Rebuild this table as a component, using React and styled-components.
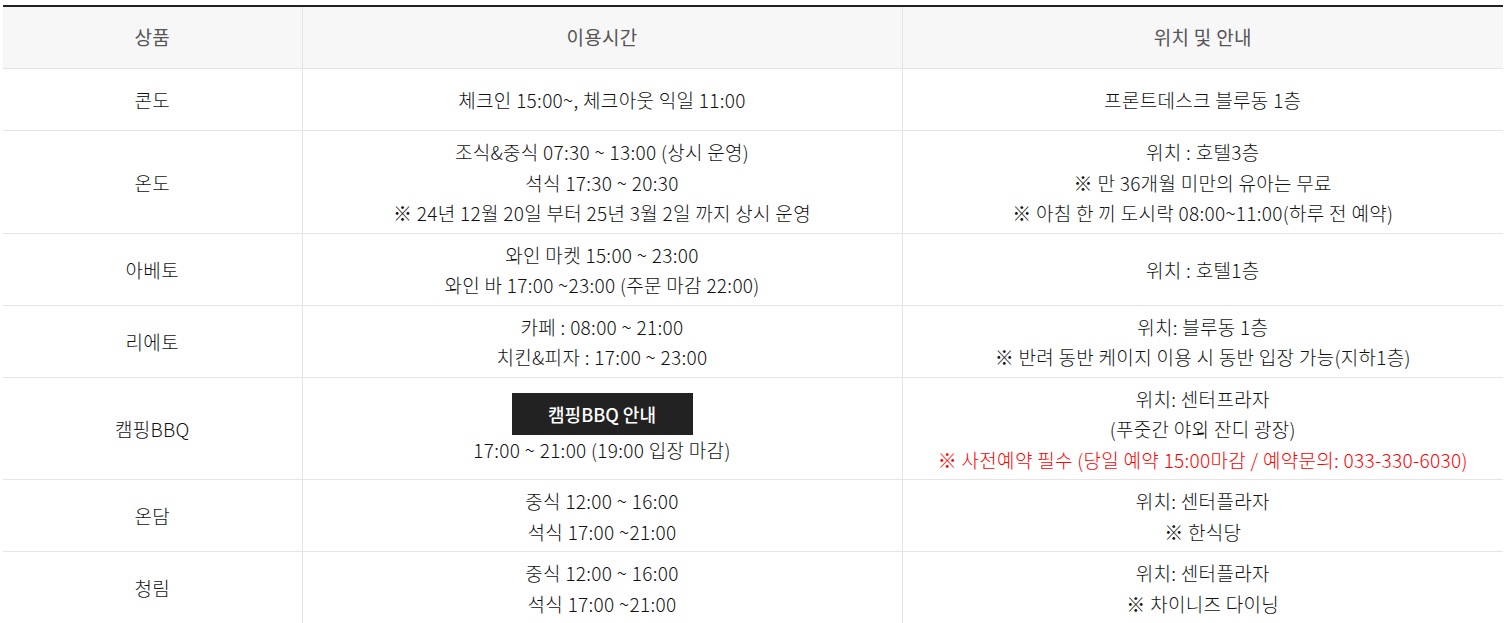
import React from "react";
import styled, { createGlobalStyle } from "styled-components";

const GlobalStyle = createGlobalStyle`
  html, body {
    margin: 0;
    padding: 0;
    background: #fff;
  }
  body {
    font-family: "Noto Sans CJK KR", "Noto Sans", sans-serif;
    color: #222;
  }
`;

const Wrap = styled.div`
  padding: 5px 6px 0 3px;
`;

const Table = styled.table`
  width: 1500px;
  border-collapse: collapse;
  table-layout: fixed;
  border-top: 2px solid #222;
  font-size: 19px;
  font-weight: 300;
  letter-spacing: 0.3px;
  line-height: 30.5px;
`;

const Col = styled.col`
  width: ${(p) => p.$w}px;
`;

const Th = styled.th`
  height: 51px;
  padding: 5px 10px;
  background: #f7f7f7;
  color: #555;
  font-weight: 400;
  text-align: center;
  border-bottom: 1px solid #e5e5e5;
  border-left: 1px solid #e5e5e5;
  &:first-child {
    border-left: 0;
  }
`;

const Td = styled.td`
  height: 51px;
  padding: 6px 10px 4px;
  text-align: center;
  vertical-align: middle;
  color: #111;
  border-bottom: 1px solid #e5e5e5;
  border-left: 1px solid #e5e5e5;
  &:first-child {
    border-left: 0;
  }
`;

const Line = styled.div`
  color: ${(p) => (p.$red ? "#ff0000" : "inherit")};
`;

const GuideButton = styled.button`
  display: block;
  margin: 0 auto;
  width: 181px;
  height: 42px;
  border: 0;
  background: #222;
  color: #fff;
  font-family: inherit;
  font-size: 18px;
  font-weight: 500;
  letter-spacing: 0;
  cursor: pointer;
`;

const rows = [
  {
    name: "콘도",
    time: ["체크인 15:00~, 체크아웃 익일 11:00"],
    info: ["프론트데스크 블루동 1층"],
  },
  {
    name: "온도",
    time: [
      "조식&중식 07:30 ~ 13:00 (상시 운영)",
      "석식 17:30 ~ 20:30",
      "※ 24년 12월 20일 부터 25년 3월 2일 까지 상시 운영",
    ],
    info: [
      "위치 : 호텔3층",
      "※ 만 36개월 미만의 유아는 무료",
      "※ 아침 한 끼 도시락 08:00~11:00(하루 전 예약)",
    ],
  },
  {
    name: "아베토",
    time: ["와인 마켓 15:00 ~ 23:00", "와인 바 17:00 ~23:00 (주문 마감 22:00)"],
    info: ["위치 : 호텔1층"],
  },
  {
    name: "리에토",
    time: ["카페 : 08:00 ~ 21:00", "치킨&피자 : 17:00 ~ 23:00"],
    info: ["위치: 블루동 1층", "※ 반려 동반 케이지 이용 시 동반 입장 가능(지하1층)"],
  },
  {
    name: "캠핑BBQ",
    button: "캠핑BBQ 안내",
    time: ["17:00 ~ 21:00 (19:00 입장 마감)"],
    info: ["위치: 센터프라자", "(푸줏간 야외 잔디 광장)"],
    red: "※ 사전예약 필수 (당일 예약 15:00마감 / 예약문의: 033-330-6030)",
  },
  {
    name: "온담",
    time: ["중식 12:00 ~ 16:00", "석식 17:00 ~21:00"],
    info: ["위치: 센터플라자", "※ 한식당"],
  },
  {
    name: "청림",
    time: ["중식 12:00 ~ 16:00", "석식 17:00 ~21:00"],
    info: ["위치: 센터플라자", "※ 차이니즈 다이닝"],
  },
];

export default function App() {
  return (
    <Wrap>
      <GlobalStyle />
      <Table>
        <colgroup>
          <Col $w={299} />
          <Col $w={600} />
          <Col $w={601} />
        </colgroup>
        <thead>
          <tr>
            <Th>상품</Th>
            <Th>이용시간</Th>
            <Th>위치 및 안내</Th>
          </tr>
        </thead>
        <tbody>
          {rows.map((r) => (
            <tr key={r.name}>
              <Td>{r.name}</Td>
              <Td>
                {r.button && <GuideButton>{r.button}</GuideButton>}
                {r.time.map((t) => (
                  <Line key={t}>{t}</Line>
                ))}
              </Td>
              <Td>
                {r.info.map((t) => (
                  <Line key={t}>{t}</Line>
                ))}
                {r.red && <Line $red>{r.red}</Line>}
              </Td>
            </tr>
          ))}
        </tbody>
      </Table>
    </Wrap>
  );
}
